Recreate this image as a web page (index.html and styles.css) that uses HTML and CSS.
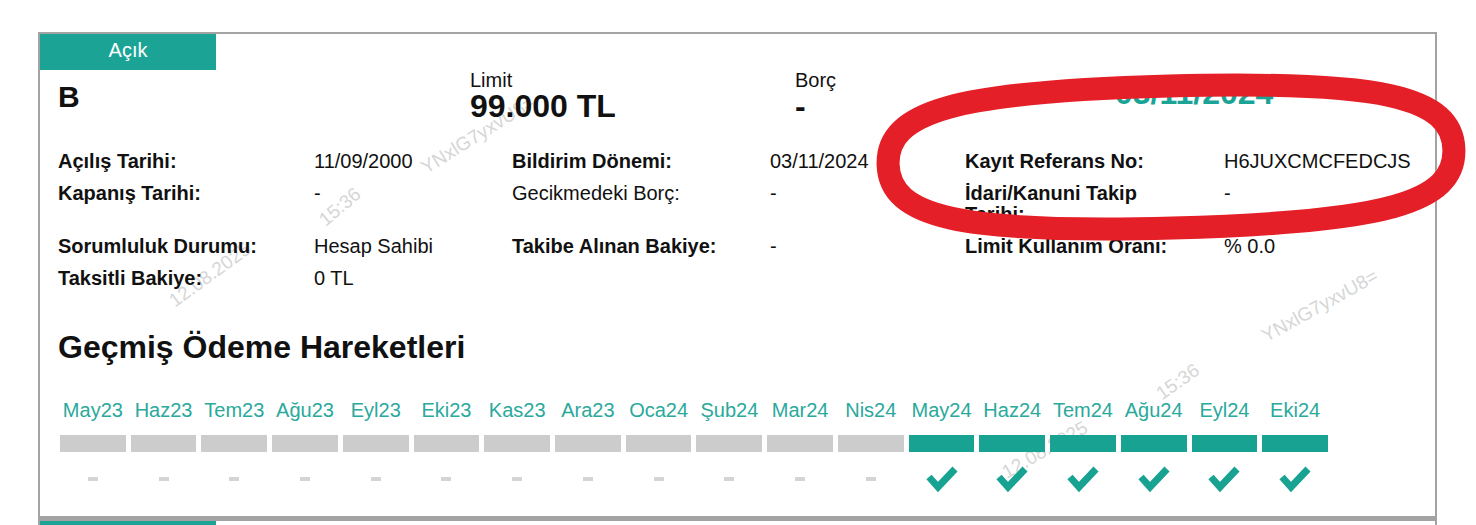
FILE: index.html
```html
<!DOCTYPE html>
<html>
<head>
  <title>Kredi Kartı Detayı</title>
  <link rel="stylesheet" href="styles.css">
</head>
<body>
  <div class="page">
    <div class="card">
      <div class="tab">Açık</div>

      <div class="head">
        <div class="name">B</div>
        <div class="figure limit">
          <div class="figure-label">Limit</div>
          <div class="figure-value">99.000 TL</div>
        </div>
        <div class="figure debt">
          <div class="figure-label">Borç</div>
          <div class="figure-value">-</div>
        </div>
        <div class="report-date">03/11/2024</div>
      </div>

      <div class="details">
        <div class="label">Açılış Tarihi:</div>
        <div class="value">11/09/2000</div>
        <div class="label">Bildirim Dönemi:</div>
        <div class="value">03/11/2024</div>
        <div class="label">Kayıt Referans No:</div>
        <div class="value">H6JUXCMCFEDCJS</div>

        <div class="label">Kapanış Tarihi:</div>
        <div class="value">-</div>
        <div class="label plain">Gecikmedeki Borç:</div>
        <div class="value">-</div>
        <div class="label">İdari/Kanuni Takip Tarihi:</div>
        <div class="value">-</div>

        <div class="label">Sorumluluk Durumu:</div>
        <div class="value">Hesap Sahibi</div>
        <div class="label">Takibe Alınan Bakiye:</div>
        <div class="value">-</div>
        <div class="label">Limit Kullanım Oranı:</div>
        <div class="value">% 0.0</div>

        <div class="label">Taksitli Bakiye:</div>
        <div class="value">0 TL</div>
      </div>

      <h2 class="history-title">Geçmiş Ödeme Hareketleri</h2>

      <div class="history">
        <div class="month"><div class="month-name">May23</div><div class="bar"></div><div class="status"><span class="dash"></span></div></div>
        <div class="month"><div class="month-name">Haz23</div><div class="bar"></div><div class="status"><span class="dash"></span></div></div>
        <div class="month"><div class="month-name">Tem23</div><div class="bar"></div><div class="status"><span class="dash"></span></div></div>
        <div class="month"><div class="month-name">Ağu23</div><div class="bar"></div><div class="status"><span class="dash"></span></div></div>
        <div class="month"><div class="month-name">Eyl23</div><div class="bar"></div><div class="status"><span class="dash"></span></div></div>
        <div class="month"><div class="month-name">Eki23</div><div class="bar"></div><div class="status"><span class="dash"></span></div></div>
        <div class="month"><div class="month-name">Kas23</div><div class="bar"></div><div class="status"><span class="dash"></span></div></div>
        <div class="month"><div class="month-name">Ara23</div><div class="bar"></div><div class="status"><span class="dash"></span></div></div>
        <div class="month"><div class="month-name">Oca24</div><div class="bar"></div><div class="status"><span class="dash"></span></div></div>
        <div class="month"><div class="month-name">Şub24</div><div class="bar"></div><div class="status"><span class="dash"></span></div></div>
        <div class="month"><div class="month-name">Mar24</div><div class="bar"></div><div class="status"><span class="dash"></span></div></div>
        <div class="month"><div class="month-name">Nis24</div><div class="bar"></div><div class="status"><span class="dash"></span></div></div>
        <div class="month"><div class="month-name">May24</div><div class="bar paid"></div><div class="status"><svg class="check" viewBox="0 0 34 28"><polyline points="4,12 13,22 30,4"/></svg></div></div>
        <div class="month"><div class="month-name">Haz24</div><div class="bar paid"></div><div class="status"><svg class="check" viewBox="0 0 34 28"><polyline points="4,12 13,22 30,4"/></svg></div></div>
        <div class="month"><div class="month-name">Tem24</div><div class="bar paid"></div><div class="status"><svg class="check" viewBox="0 0 34 28"><polyline points="4,12 13,22 30,4"/></svg></div></div>
        <div class="month"><div class="month-name">Ağu24</div><div class="bar paid"></div><div class="status"><svg class="check" viewBox="0 0 34 28"><polyline points="4,12 13,22 30,4"/></svg></div></div>
        <div class="month"><div class="month-name">Eyl24</div><div class="bar paid"></div><div class="status"><svg class="check" viewBox="0 0 34 28"><polyline points="4,12 13,22 30,4"/></svg></div></div>
        <div class="month"><div class="month-name">Eki24</div><div class="bar paid"></div><div class="status"><svg class="check" viewBox="0 0 34 28"><polyline points="4,12 13,22 30,4"/></svg></div></div>
      </div>

      <!-- filigran -->
      <div class="watermark wm-1">YNxlG7yxvU8=</div>
      <div class="watermark wm-2">15:36</div>
      <div class="watermark wm-3">12.08.2025</div>
      <div class="watermark wm-4">YNxlG7yxvU8=</div>
      <div class="watermark wm-5">15:36</div>
      <div class="watermark wm-6">12.08.2025</div>
    </div>

    <div class="card card-next">
      <div class="tab"></div>
    </div>

    <svg class="annotation" width="1476" height="525" viewBox="0 0 1476 525">
      <path d="M888,157 C888,103.75 958.75,86 1171,86 C1383.25,86 1454,103.75 1454,157 C1454,210.25 1383.25,228 1171,228 C958.75,228 888,210.25 888,157 Z" transform="rotate(-1.5 1171 157)"/>
    </svg>
  </div>
</body>
</html>
```

FILE: styles.css
```css
* {
  box-sizing: border-box;
  margin: 0;
  padding: 0;
}
body {
  font-family: "Liberation Sans", Arial, sans-serif;
  background-color: #fff;
  color: #111;
}
.page {
  position: relative;
  width: 1476px;
  height: 525px;
  padding: 32px 0 0 38px;
  overflow: hidden;
}
.card {
  position: relative;
  width: 1399px;
  border: 2px solid #a3a3a3;
  border-bottom-width: 3px;
  padding-bottom: 24px;
}
.card-next {
  border-bottom: none;
  height: 60px;
}
.tab {
  width: 176px;
  height: 36px;
  background-color: #1ba496;
  color: #fff;
  font-size: 20px;
  line-height: 32px;
  text-align: center;
}

.head {
  position: relative;
  z-index: 1;
  display: flex;
  padding-left: 18px;
}
.name {
  width: 412px;
  padding-top: 10px;
  font-size: 30px;
  font-weight: bold;
  line-height: 34px;
}
.limit {
  width: 325px;
}
.debt {
  width: 320px;
}
.figure-label {
  font-size: 20px;
  line-height: 21px;
}
.figure-value {
  font-size: 32px;
  font-weight: bold;
  line-height: 30px;
}
.report-date {
  padding-top: 5px;
  font-size: 32px;
  font-weight: bold;
  line-height: 36px;
  color: #1ba496;
}

.details {
  position: relative;
  z-index: 1;
  display: grid;
  grid-template-columns: 256px 198px 258px 195px 259px auto;
  row-gap: 11px;
  margin-top: 30px;
  padding-left: 18px;
  font-size: 20px;
  line-height: 21px;
}
.details .label {
  font-weight: bold;
  padding-right: 30px;
}
.details .label.plain {
  font-weight: normal;
}

.history-title {
  position: relative;
  z-index: 1;
  margin-top: 40px;
  padding-left: 18px;
  font-size: 32px;
  line-height: 36px;
  font-weight: bold;
}
.history {
  position: relative;
  z-index: 1;
  display: grid;
  grid-template-columns: repeat(18, 1fr);
  column-gap: 5px;
  width: 1288px;
  margin-top: 33px;
  padding-left: 20px;
}
.month {
  display: flex;
  flex-direction: column;
  align-items: center;
}
.month-name {
  font-size: 20px;
  line-height: 24px;
  color: #2aa99c;
  white-space: nowrap;
}
.bar {
  align-self: stretch;
  height: 17px;
  margin-top: 13px;
  background-color: #cccccc;
}
.bar.paid {
  background-color: #17a292;
}
.status {
  display: flex;
  align-items: center;
  justify-content: center;
  height: 27px;
  margin-top: 13px;
}
.dash {
  width: 10px;
  height: 4px;
  background-color: #d4d4d4;
}
.check {
  width: 34px;
  height: 28px;
}
.check polyline {
  fill: none;
  stroke: #17a292;
  stroke-width: 7;
}

.watermark {
  position: absolute;
  z-index: 0;
  font-size: 19px;
  color: #d6d6d6;
  white-space: nowrap;
}
.wm-1 { left: 438px; top: 101px; transform: translate(-50%, -50%) rotate(-32deg); }
.wm-2 { left: 300px; top: 173px; transform: translate(-50%, -50%) rotate(-40deg); }
.wm-3 { left: 170px; top: 241px; transform: translate(-50%, -50%) rotate(-36deg); }
.wm-4 { left: 1280px; top: 272px; transform: translate(-50%, -50%) rotate(-29deg); }
.wm-5 { left: 1138px; top: 348px; transform: translate(-50%, -50%) rotate(-35deg); }
.wm-6 { left: 1005px; top: 416px; transform: translate(-50%, -50%) rotate(-30deg); }

.annotation {
  position: absolute;
  left: 0;
  top: 0;
  z-index: 5;
  pointer-events: none;
}
.annotation path {
  fill: none;
  stroke: #e41f27;
  stroke-width: 23;
}
```
